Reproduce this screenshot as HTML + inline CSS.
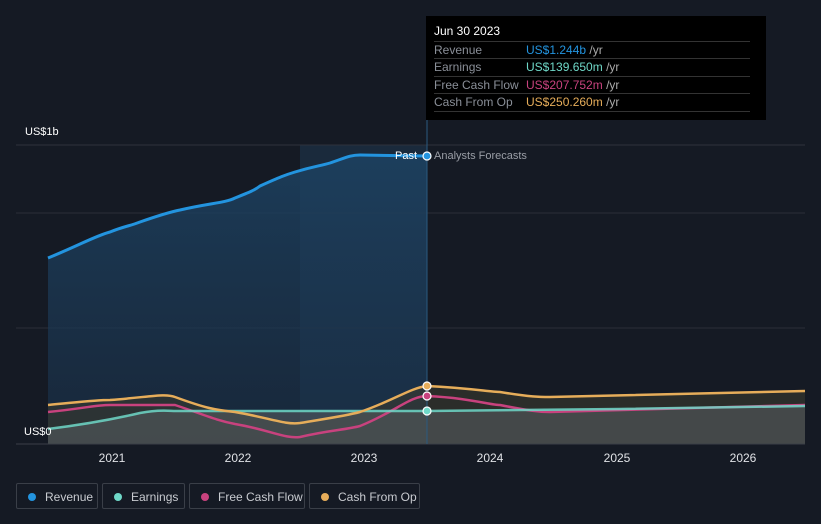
<!DOCTYPE html>
<html><head><style>
body{margin:0;background:#151a24;font-family:"Liberation Sans",sans-serif;width:821px;height:524px;overflow:hidden;position:relative}
.tt{position:absolute;left:426px;top:16px;width:340px;height:104px;background:#000;color:#fff;font-size:12px}
.tt .h{position:absolute;left:8px;top:8px;font-size:12px}
.row{position:absolute;left:8px;width:316px;border-top:1px solid #333;height:17px;line-height:17px;color:#8a8f98}
.row span{position:absolute;left:92px}
.row i{font-style:normal;color:#aaa}
.leg{position:absolute;top:483px;height:26px;border:1px solid #3a3f48;border-radius:2px;color:#c8cbd0;font-size:12px;line-height:26px;box-sizing:border-box}
.leg b{position:absolute;left:11px;top:9px;width:8px;height:8px;border-radius:50%}
.leg span{position:absolute;left:28px}
.yr{position:absolute;top:451px;color:#e0e2e6;font-size:12px;transform:translateX(-50%)}
</style></head><body>
<svg width="821" height="524" style="position:absolute;left:0;top:0">
<defs><linearGradient id="g" x1="0" y1="0" x2="0" y2="1"><stop offset="0" stop-color="#1d4262" stop-opacity=".85"/><stop offset="1" stop-color="#1a3048" stop-opacity=".6"/></linearGradient></defs>
<rect x="300" y="145" width="127" height="299" fill="#1a2a3c"/>
<line x1="16" y1="145" x2="805" y2="145" stroke="#2e333c"/>
<line x1="16" y1="213" x2="805" y2="213" stroke="#2a2f38"/>
<line x1="16" y1="328" x2="805" y2="328" stroke="#2a2f38"/>
<path d="M48,258 C80,245 95,236 110,232 C125,226 130,226 140,222 C160,215 170,212 180,210 C210,203 225,203 235,198 C250,192 255,190 260,186 C280,177 285,175 295,172 C315,166 320,166 330,163 C345,158 350,155 360,155 L427,156 L427,444 L48,444 Z" fill="url(#g)"/>
<path d="M48,258 C80,245 95,236 110,232 C125,226 130,226 140,222 C160,215 170,212 180,210 C210,203 225,203 235,198 C250,192 255,190 260,186 C280,177 285,175 295,172 C315,166 320,166 330,163 C345,158 350,155 360,155 L427,156" fill="none" stroke="#2394df" stroke-width="3"/>
<path d="M48,405 C80,402 95,400 110,400 C150,397 165,393 175,397 C205,408 215,410 235,412 C270,418 285,425 300,423 C330,418 345,416 360,412 C395,400 410,388 427,386 C470,388 490,392 500,392 C530,397 540,397 550,397 L805,391 L805,444 L48,444Z" fill="#3a3a2e" opacity=".6"/>
<path d="M48,429 C80,425 110,420 140,413 C160,409 170,411 175,411 L427,411 L805,406 L805,444 L48,444Z" fill="#5a5e62" opacity=".55"/>
<path d="M48,412 C80,409 95,405 110,405 L175,405 C205,415 215,420 235,424 C270,430 285,439 300,437 C330,430 345,430 360,426 C395,412 410,396 427,396 C470,398 490,405 500,405 C530,411 540,412 550,412 L805,405" fill="none" stroke="#c8427e" stroke-width="2.5"/>
<path d="M48,429 C80,425 110,420 140,413 C160,409 170,411 175,411 L427,411 L620,409 L805,406" fill="none" stroke="#6fd8c8" stroke-width="2.5" opacity=".85"/>
<path d="M48,405 C80,402 95,400 110,400 C150,397 165,393 175,397 C205,408 215,410 235,412 C270,418 285,425 300,423 C330,418 345,416 360,412 C395,400 410,388 427,386 C470,388 490,392 500,392 C530,397 540,397 550,397 L805,391" fill="none" stroke="#e6ad5a" stroke-width="2.5"/>
<line x1="16" y1="444" x2="805" y2="444" stroke="#3a3f48"/>
<line x1="427" y1="120" x2="427" y2="444" stroke="#2a5a80"/>
<circle cx="427" cy="156" r="4" fill="#2394df" stroke="#fff" stroke-width="1.2"/>
<circle cx="427" cy="386" r="4" fill="#e6ad5a" stroke="#fff" stroke-width="1.2"/>
<circle cx="427" cy="396" r="4" fill="#c8427e" stroke="#fff" stroke-width="1.2"/>
<circle cx="427" cy="411" r="4" fill="#6fd8c8" stroke="#fff" stroke-width="1.2"/>
</svg>
<div style="position:absolute;left:25px;top:126px;color:#fff;font-size:11px">US$1b</div>
<div style="position:absolute;left:24px;top:426px;color:#fff;font-size:11px">US$0</div>
<div style="position:absolute;left:395px;top:150px;color:#fff;font-size:11px">Past</div>
<div style="position:absolute;left:434px;top:150px;color:#9a9ea6;font-size:11px">Analysts Forecasts</div>
<div class="yr" style="left:112px">2021</div><div class="yr" style="left:238px">2022</div><div class="yr" style="left:364px">2023</div><div class="yr" style="left:490px">2024</div><div class="yr" style="left:617px">2025</div><div class="yr" style="left:743px">2026</div>
<div class="tt"><div class="h">Jun 30 2023</div>
<div class="row" style="top:25px">Revenue<span style="color:#2394df">US$1.244b <i>/yr</i></span></div>
<div class="row" style="top:42px">Earnings<span style="color:#6fd8c8">US$139.650m <i>/yr</i></span></div>
<div class="row" style="top:60px">Free Cash Flow<span style="color:#c8427e">US$207.752m <i>/yr</i></span></div>
<div class="row" style="top:77px">Cash From Op<span style="color:#e6ad5a">US$250.260m <i>/yr</i></span></div>
<div class="row" style="top:95px;height:0"></div>
</div>
<div class="leg" style="left:16px;width:82px"><b style="background:#2394df"></b><span>Revenue</span></div>
<div class="leg" style="left:102px;width:83px"><b style="background:#6fd8c8"></b><span>Earnings</span></div>
<div class="leg" style="left:189px;width:116px"><b style="background:#c8427e"></b><span>Free Cash Flow</span></div>
<div class="leg" style="left:309px;width:111px"><b style="background:#e6ad5a"></b><span>Cash From Op</span></div>
</body></html>
